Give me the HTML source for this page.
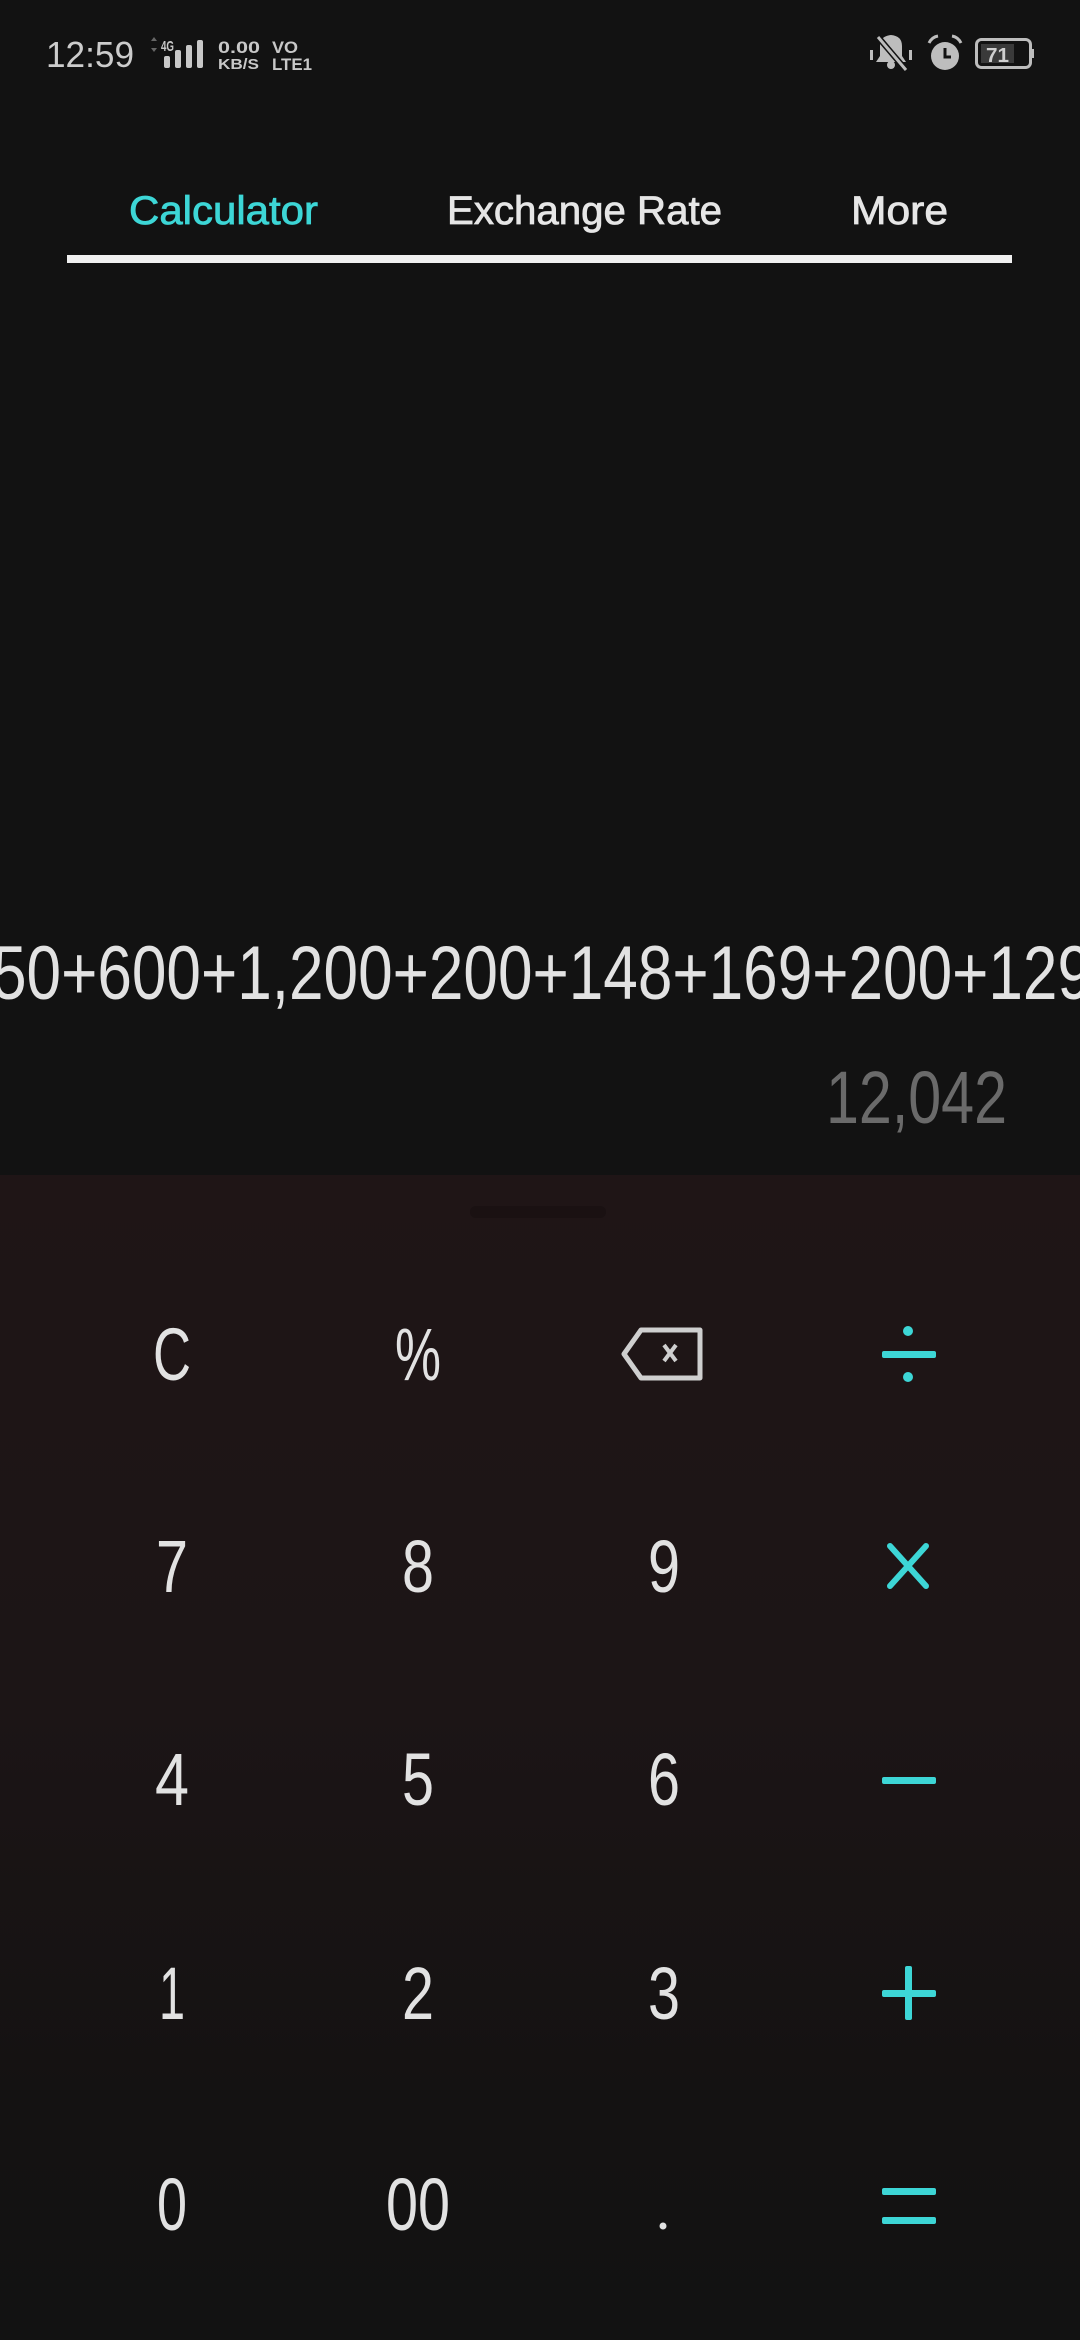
<!DOCTYPE html>
<html><head><meta charset="utf-8">
<style>
html,body{margin:0;padding:0;background:#121212;}
svg{display:block;}
text{font-family:"Liberation Sans",sans-serif;}
</style></head>
<body>
<svg width="1080" height="2340" viewBox="0 0 1080 2340" xmlns="http://www.w3.org/2000/svg">
<defs>
<linearGradient id="kp" x1="0" y1="0" x2="0" y2="1">
<stop offset="0" stop-color="#1f1516"/>
<stop offset="0.45" stop-color="#1c1516"/>
<stop offset="0.8" stop-color="#141212"/>
<stop offset="1" stop-color="#121212"/>
</linearGradient>
</defs>
<rect width="1080" height="2340" fill="#121212"/>
<rect y="1175" width="1080" height="1165" fill="url(#kp)"/>
<rect x="470" y="1206" width="136" height="12" rx="6" fill="#1a1112"/>

<!-- status bar -->
<text x="46" y="67" font-size="36" fill="#cccccc" textLength="88" lengthAdjust="spacingAndGlyphs">12:59</text>
<path d="M151 41 l3 -4 l3 4z M151 48 l3 4 l3 -4z" fill="#666"/>
<text x="161" y="51" font-size="15" font-weight="bold" fill="#c8c8c8" textLength="13" lengthAdjust="spacingAndGlyphs">4G</text>
<rect x="164" y="56" width="6" height="12" rx="2" fill="#c8c8c8"/>
<rect x="175" y="50" width="6" height="18" rx="2" fill="#c8c8c8"/>
<rect x="186" y="45" width="6" height="23" rx="2" fill="#c8c8c8"/>
<rect x="197" y="40" width="6" height="28" rx="2" fill="#c8c8c8"/>
<text x="218" y="53" font-size="17" font-weight="bold" fill="#c8c8c8" textLength="42" lengthAdjust="spacingAndGlyphs">0.00</text>
<text x="218" y="69" font-size="15" font-weight="bold" fill="#c8c8c8" textLength="41" lengthAdjust="spacingAndGlyphs">KB/S</text>
<text x="272" y="53" font-size="17" font-weight="bold" fill="#c8c8c8" textLength="26" lengthAdjust="spacingAndGlyphs">VO</text>
<text x="272" y="70" font-size="17" font-weight="bold" fill="#c8c8c8" textLength="40" lengthAdjust="spacingAndGlyphs">LTE1</text>

<!-- mute bell -->
<g fill="#bdbdbd">
<path d="M880 46 q0 -10 11 -11 q11 1 11 11 l0 10 l4 6 l-30 0 l4 -6z"/>
<circle cx="891" cy="65" r="4"/>
<rect x="870" y="50" width="3" height="10"/><rect x="909" y="50" width="3" height="10"/>
</g>
<path d="M878 37 L906 70" stroke="#121212" stroke-width="6"/>
<path d="M878 37 L906 70" stroke="#bdbdbd" stroke-width="3"/>
<!-- alarm -->
<circle cx="945" cy="56" r="14" fill="#bdbdbd"/>
<path d="M945 48 v9 h6" stroke="#121212" stroke-width="3" fill="none"/>
<path d="M929 43 q3 -6 9 -7 M961 43 q-3 -6 -9 -7" stroke="#bdbdbd" stroke-width="3" fill="none"/>
<!-- battery -->
<rect x="976.5" y="39.5" width="54" height="28" rx="5" fill="none" stroke="#bdbdbd" stroke-width="3"/>
<rect x="981" y="44" width="33" height="19" fill="#3a3a3a"/>
<rect x="1031" y="49" width="3" height="9" fill="#bdbdbd"/>
<text x="986" y="62" font-size="20" font-weight="bold" fill="#d0d0d0" textLength="23" lengthAdjust="spacingAndGlyphs">71</text>

<!-- tabs -->
<g stroke-width="0.8">
<text x="129" y="224" font-size="40" fill="#3dd6d6" stroke="#3dd6d6" textLength="189" lengthAdjust="spacingAndGlyphs">Calculator</text>
<text x="447" y="224" font-size="40" fill="#e6e6e6" stroke="#e6e6e6" textLength="275" lengthAdjust="spacingAndGlyphs">Exchange Rate</text>
<text x="851" y="224" font-size="40" fill="#e6e6e6" stroke="#e6e6e6" textLength="97" lengthAdjust="spacingAndGlyphs">More</text>
</g>
<rect x="67" y="255" width="945" height="8" fill="#f0f0f0"/>

<!-- display -->
<text x="-8" y="999" font-size="76" fill="#e2e2e2" textLength="1100" lengthAdjust="spacingAndGlyphs">50+600+1,200+200+148+169+200+129</text>
<text x="826" y="1123" font-size="74" fill="#6a6a6a" textLength="181" lengthAdjust="spacingAndGlyphs">12,042</text>

<!-- keypad -->
<g font-size="74" fill="#e2e2e2" text-anchor="middle">
<text x="172" y="1380" textLength="38" lengthAdjust="spacingAndGlyphs">C</text>
<text x="418" y="1380" textLength="46" lengthAdjust="spacingAndGlyphs">%</text>
<text x="172" y="1592" textLength="32" lengthAdjust="spacingAndGlyphs">7</text>
<text x="418" y="1592" textLength="32" lengthAdjust="spacingAndGlyphs">8</text>
<text x="664" y="1592" textLength="32" lengthAdjust="spacingAndGlyphs">9</text>
<text x="172" y="1805" textLength="34" lengthAdjust="spacingAndGlyphs">4</text>
<text x="418" y="1805" textLength="32" lengthAdjust="spacingAndGlyphs">5</text>
<text x="664" y="1805" textLength="32" lengthAdjust="spacingAndGlyphs">6</text>
<text x="172" y="2019" textLength="26" lengthAdjust="spacingAndGlyphs">1</text>
<text x="418" y="2019" textLength="32" lengthAdjust="spacingAndGlyphs">2</text>
<text x="664" y="2019" textLength="32" lengthAdjust="spacingAndGlyphs">3</text>
<text x="172" y="2230" textLength="30" lengthAdjust="spacingAndGlyphs">0</text>
<text x="418" y="2230" textLength="64" lengthAdjust="spacingAndGlyphs">00</text>
</g>
<circle cx="663" cy="2226" r="3.5" fill="#e2e2e2"/>
<!-- backspace -->
<path d="M641 1330 h59 v48 h-59 l-17 -24z" fill="none" stroke="#cfcfcf" stroke-width="5" stroke-linejoin="round"/>
<path d="M664 1345 l12 16 M676 1345 l-12 16" stroke="#cfcfcf" stroke-width="4"/>
<!-- operators -->
<g fill="#3dd6d6">
<rect x="882" y="1351" width="54" height="7" rx="2"/>
<circle cx="908" cy="1331" r="5"/><circle cx="908" cy="1377" r="5"/>
<rect x="882" y="1777" width="54" height="7" rx="2"/>
<rect x="882" y="1990" width="54" height="7" rx="2"/>
<rect x="905" y="1966" width="7" height="54" rx="2"/>
<rect x="882" y="2188" width="54" height="7" rx="2"/>
<rect x="882" y="2217" width="54" height="7" rx="2"/>
</g>
<path d="M890 1546 L926 1586 M926 1546 L890 1586" stroke="#3dd6d6" stroke-width="6" stroke-linecap="round"/>
</svg>
</body></html>
